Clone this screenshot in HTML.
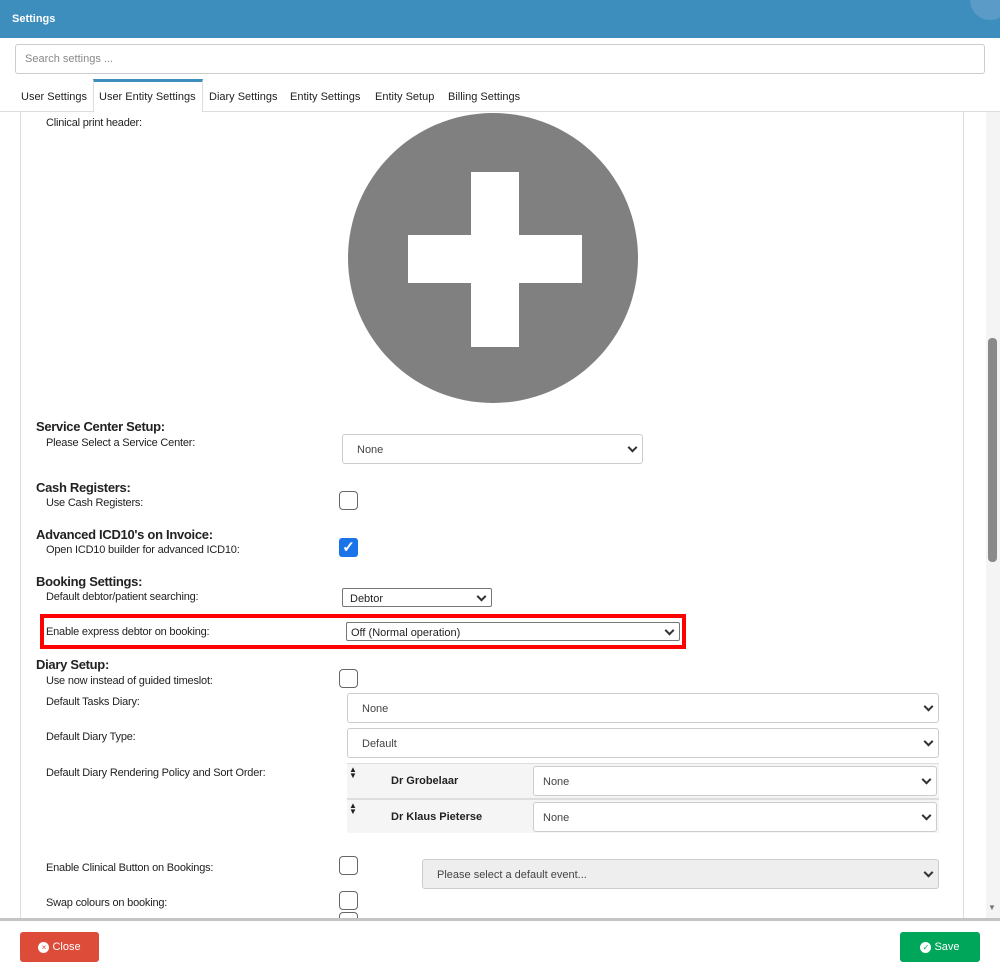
<!DOCTYPE html>
<html><head><style>
*{box-sizing:border-box;margin:0;padding:0}
body{width:1000px;height:972px;position:relative;overflow:hidden;background:#fff;font-family:"Liberation Sans",sans-serif;font-size:11px;color:#222}
.a{position:absolute}
.h{font-weight:bold;font-size:13px;color:#222;letter-spacing:-0.3px;margin-top:1px}
.l{font-size:11px;letter-spacing:-0.2px;margin-top:2px}
.sel{position:absolute;border:1px solid #ccc;border-radius:3px;background:#fff;font-size:11px;color:#444;padding-left:14px;padding-top:2px;display:flex;align-items:center}
.sel:after{content:"";position:absolute;right:6px;top:50%;width:5px;height:5px;border-right:2px solid #333;border-bottom:2px solid #333;transform:translateY(-70%) rotate(45deg)}
.cb{position:absolute;width:19px;height:19px;border:1.5px solid #666;border-radius:4px;background:#fff}
.tab{position:absolute;top:91px;font-size:11px;color:#222}
</style></head><body>
<div class="a" style="left:0;top:0;width:1000px;height:38px;background:#3d8dbd"></div>
<div class="a" style="left:12px;top:13px;color:#fff;font-weight:bold;font-size:11px">Settings</div>
<div class="a" style="left:970px;top:-20px;width:40px;height:40px;border-radius:50%;background:#5a9cc7"></div>
<div class="a" style="left:15px;top:44px;width:970px;height:30px;border:1px solid #ccc;border-radius:3px"></div>
<div class="a" style="left:25px;top:53px;color:#888;font-size:11px">Search settings ...</div>
<div class="a" style="left:0;top:111px;width:1000px;height:1px;background:#ddd"></div>
<div class="a" style="left:93px;top:79px;width:110px;height:33px;border:1px solid #ddd;border-bottom:none;border-top:3px solid #3d8dbd;background:#fff"></div>
<div class="tab" style="left:21px">User Settings</div>
<div class="tab" style="left:99px">User Entity Settings</div>
<div class="tab" style="left:209px">Diary Settings</div>
<div class="tab" style="left:290px">Entity Settings</div>
<div class="tab" style="left:375px">Entity Setup</div>
<div class="tab" style="left:448px">Billing Settings</div>
<div class="a" style="left:20px;top:112px;width:1px;height:808px;background:#ddd"></div>
<div class="a" style="left:963px;top:112px;width:1px;height:808px;background:#ddd"></div>
<div class="a" style="left:986px;top:112px;width:14px;height:808px;background:#f4f4f4"></div>
<div class="a" style="left:988px;top:338px;width:9px;height:224px;background:#8a8a8a;border-radius:4px"></div>
<div class="a" style="left:988px;top:903px;font-size:8px;color:#777">▼</div>
<div class="a l" style="left:46px;top:115px">Clinical print header:</div>
<div class="a" style="left:348px;top:113px;width:290px;height:290px;border-radius:50%;background:#808080"></div>
<div class="a" style="left:471px;top:172px;width:48px;height:175px;background:#fff"></div>
<div class="a" style="left:408px;top:235px;width:174px;height:48px;background:#fff"></div>
<div class="a h" style="left:36px;top:418px">Service Center Setup:</div>
<div class="a l" style="left:46px;top:435px">Please Select a Service Center:</div>
<div class="sel" style="left:342px;top:434px;width:301px;height:30px">None</div>
<div class="a h" style="left:36px;top:479px">Cash Registers:</div>
<div class="a l" style="left:46px;top:495px">Use Cash Registers:</div>
<div class="cb" style="left:339px;top:491px"></div>
<div class="a h" style="left:36px;top:526px">Advanced ICD10's on Invoice:</div>
<div class="a l" style="left:46px;top:542px">Open ICD10 builder for advanced ICD10:</div>
<div class="a" style="left:339px;top:538px;width:19px;height:19px;border-radius:3px;background:#1a73e8;color:#fff;font-size:15px;font-weight:bold;text-align:center;line-height:19px">✓</div>
<div class="a h" style="left:36px;top:573px">Booking Settings:</div>
<div class="a l" style="left:46px;top:589px">Default debtor/patient searching:</div>
<div class="sel" style="left:342px;top:588px;width:150px;height:19px;border-color:#777;border-radius:2px;padding-left:7px;color:#222">Debtor</div>
<div class="a" style="left:40px;top:614px;width:646px;height:35px;border:4px solid #f00"></div>
<div class="a l" style="left:46px;top:624px">Enable express debtor on booking:</div>
<div class="sel" style="left:346px;top:622px;width:334px;height:19px;border-color:#777;border-radius:2px;padding-left:4px;color:#222">Off (Normal operation)</div>
<div class="a h" style="left:36px;top:656px">Diary Setup:</div>
<div class="a l" style="left:46px;top:673px">Use now instead of guided timeslot:</div>
<div class="cb" style="left:339px;top:669px"></div>
<div class="a l" style="left:46px;top:694px">Default Tasks Diary:</div>
<div class="sel" style="left:347px;top:693px;width:592px;height:30px">None</div>
<div class="a l" style="left:46px;top:729px">Default Diary Type:</div>
<div class="sel" style="left:347px;top:728px;width:592px;height:30px">Default</div>
<div class="a l" style="left:46px;top:765px">Default Diary Rendering Policy and Sort Order:</div>
<div class="a" style="left:347px;top:763px;width:592px;height:70px;background:#f5f5f5"></div>
<div class="a" style="left:347px;top:763px;width:592px;height:1px;background:#ddd"></div>
<div class="a" style="left:347px;top:798px;width:592px;height:2px;background:#ddd"></div>
<div class="a" style="left:349px;top:767px;font-size:8px;line-height:6px">▲<br>▼</div>
<div class="a" style="left:349px;top:803px;font-size:8px;line-height:6px">▲<br>▼</div>
<div class="a" style="left:391px;top:775px;font-weight:bold;font-size:11px">Dr Grobelaar</div>
<div class="a" style="left:391px;top:811px;font-weight:bold;font-size:11px">Dr Klaus Pieterse</div>
<div class="sel" style="left:533px;top:766px;width:404px;height:30px;padding-left:9px">None</div>
<div class="sel" style="left:533px;top:802px;width:404px;height:30px;padding-left:9px">None</div>
<div class="a l" style="left:46px;top:860px">Enable Clinical Button on Bookings:</div>
<div class="cb" style="left:339px;top:856px"></div>
<div class="sel" style="left:422px;top:859px;width:517px;height:30px;background:#eee;padding-left:14px">Please select a default event...</div>
<div class="a l" style="left:46px;top:895px">Swap colours on booking:</div>
<div class="cb" style="left:339px;top:891px"></div>
<div class="cb" style="left:339px;top:912px"></div>
<div class="a" style="left:0;top:918px;width:1000px;height:54px;background:#fff;border-top:3px solid #c4c4c4"></div>
<div class="a" style="left:20px;top:932px;width:79px;height:30px;background:#dd4b39;border-radius:3px;color:#fff;font-size:11px;display:flex;align-items:center;justify-content:center"><span style="display:inline-block;width:11px;height:11px;border-radius:50%;background:#fff;color:#dd4b39;font-size:8px;line-height:11px;text-align:center;margin-right:3px">×</span>Close</div>
<div class="a" style="left:900px;top:932px;width:80px;height:30px;background:#00a65a;border-radius:3px;color:#fff;font-size:11px;display:flex;align-items:center;justify-content:center"><span style="display:inline-block;width:11px;height:11px;border-radius:50%;background:#fff;color:#00a65a;font-size:8px;line-height:11px;text-align:center;margin-right:3px">✓</span>Save</div>
</body></html>
